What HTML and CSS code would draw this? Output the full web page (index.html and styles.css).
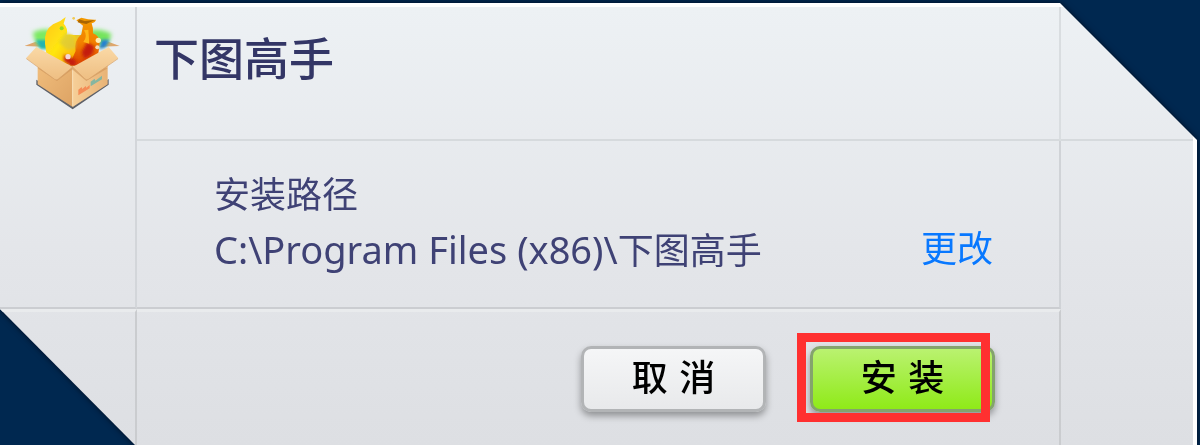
FILE: index.html
```html
<!DOCTYPE html>
<html lang="zh-CN">
<head>
    <meta charset="UTF-8">
    <meta name="viewport" content="width=device-width, initial-scale=1.0">
    <title>下图高手</title>
    <link rel="stylesheet" href="styles.css">
</head>
<body>
    <div class="shell">
        <main class="installer">
            <div class="side side-logo">
                <svg class="logo" viewBox="30 30 285 285" aria-hidden="true">
                    <defs>
                        <linearGradient id="boxLeft" x1="0" y1="0" x2="1" y2="1">
                            <stop offset="0" stop-color="#f0bd7c"/>
                            <stop offset="1" stop-color="#dda364"/>
                        </linearGradient>
                        <linearGradient id="boxRight" x1="0" y1="0" x2="1" y2="0">
                            <stop offset="0" stop-color="#f6cf98"/>
                            <stop offset="1" stop-color="#e8b376"/>
                        </linearGradient>
                        <linearGradient id="flap" x1="0" y1="0" x2="0" y2="1">
                            <stop offset="0" stop-color="#fad9a6"/>
                            <stop offset="1" stop-color="#eebe82"/>
                        </linearGradient>
                        <linearGradient id="yellow" x1="0" y1="0" x2="1" y2="1">
                            <stop offset="0" stop-color="#ffc61c"/>
                            <stop offset=".5" stop-color="#ffe610"/>
                            <stop offset="1" stop-color="#f6a000"/>
                        </linearGradient>
                        <linearGradient id="fire" x1="0" y1="0" x2="0" y2="1">
                            <stop offset="0" stop-color="#f29a00"/>
                            <stop offset=".5" stop-color="#f28000"/>
                            <stop offset="1" stop-color="#d83a08"/>
                        </linearGradient>
                        <filter id="soft" x="-30%" y="-30%" width="160%" height="160%">
                            <feGaussianBlur stdDeviation="7"/>
                        </filter>
                        <filter id="softer" x="-20%" y="-20%" width="140%" height="140%">
                            <feGaussianBlur stdDeviation="4"/>
                        </filter>
                        <filter id="edge" x="-10%" y="-10%" width="120%" height="120%">
                            <feGaussianBlur stdDeviation="2"/>
                        </filter>
                    </defs>
                    <path d="M66 228v10l107 72 106-72v-12l-106 68z" fill="#5d6068" stroke="#5d6068" stroke-width="4" filter="url(#edge)"/>
                    <!-- back flaps -->
                    <path d="M28 123l34-13 24 15zM314 123l-34-13-26 15z" fill="#dfa66d"/>
                    <!-- glow behind the pictures -->
                    <path d="M54 82q40-18 70 0l10 42H72q-16-18-18-42z" fill="#7bea62" filter="url(#soft)"/>
                    <path d="M202 82q46-18 87 4-4 30-26 38h-54z" fill="#75e45c" filter="url(#soft)"/>
                    <path d="M62 105h34l8 27H76z" fill="#22b4ae" filter="url(#softer)"/>
                    <path d="M260 104h24l-12 23-20 6z" fill="#237fd3" filter="url(#softer)"/>
                    <g filter="url(#edge)">
                        <path d="M122 90h80v82l-31 14-64-43z" fill="#e7c62a"/>
                        <path d="M90 116q-4-40 24-58 22-7 38-22l-6 20q14 14 9 33 14-2 26 3l12 38-19 38-20 12-60-36z" fill="url(#yellow)"/>
                        <path d="M184 46l15-8q24 7 44 6-2 8-13 11 6 16 4 30 20 8 20 28l-4 34-55 38-31-7 18-40q-7-28 17-50l5-26z" fill="url(#fire)"/>
                        <path d="M192 43l17 5 31-3-26 12-26-5z" fill="#aa6500"/>
                    </g>
                    <path d="M216 112l22 12-5 23-25 15-8-20zM147 150l22 7 16 13-12 16-26-18z" fill="#c41a0c" filter="url(#softer)"/>
                    <path d="M153 82l28 14 2 33-25 6-26-22z" fill="#d9c841" opacity=".7" filter="url(#softer)"/>
                    <path d="M207 76q12 18-2 35l18 5q-2-27-3-42z" fill="#ffb619" filter="url(#edge)"/>
                    <g filter="url(#edge)">
                        <circle cx="140" cy="70" r="6" fill="#94da22"/>
                        <circle cx="176" cy="40" r="4" fill="#f1ca53"/>
                        <circle cx="159" cy="155" r="8" fill="#f5d8d6"/>
                        <circle cx="250" cy="106" r="8" fill="#ffedb5"/>
                        <circle cx="247" cy="127" r="6" fill="#f5dcb7"/>
                    </g>
                    <!-- box body -->
                    <path d="M68 180l105 4v122L68 238z" fill="url(#boxLeft)"/>
                    <path d="M278 180l-105 4v122l105-68z" fill="url(#boxRight)"/>
                    <path d="M68 190l58 38 47-36v-8zM278 190l-64 38-41-34v-8z" fill="#cb8e52" opacity=".55"/>
                    <path d="M64 126l109 60-44 37q-5 3-10 0l-86-63z" fill="url(#flap)"/>
                    <path d="M281 126l-108 60 37 36q5 4 10 1l90-63z" fill="url(#flap)"/>
                    <path d="M34 161l85 62q5 3 10 0l44-37 37 36q5 4 10 1l89-62" fill="none" stroke="#d6a269" stroke-width="2"/>
                    <path d="M173 196v108" stroke="#fae0b7" stroke-width="3"/>
                    <!-- printed marks -->
                    <g filter="url(#edge)">
                        <path d="M190 254l10-8 2 6 10-9 2 5 10-8v10l-34 21z" fill="#f58d57"/>
                        <path d="M227 230l12-9 2 6 20-15v11l-34 21z" fill="#86b6a0"/>
                    </g>
                </svg>
            </div>
            <header class="title-bar">
                <h1>下图高手</h1>
            </header>
            <div class="corner"></div>
            <section class="path-info">
                <h2 class="path-label">安装路径</h2>
                <div class="path-row">
                    <span class="path"><span class="drive">C:\Program Files (x86)\</span>下图高手</span>
                    <a class="change" href="#">更改</a>
                </div>
            </section>
            <div class="side side-right"></div>
            <div class="side side-bottom"></div>
            <footer class="actions">
                <button type="button" class="btn">取 消</button>
                <div class="marked">
                    <button type="button" class="btn btn-primary">安 装</button>
                </div>
            </footer>
        </main>
    </div>
</body>
</html>
```

FILE: styles.css
```css
* { margin: 0; padding: 0; box-sizing: border-box; }

body {
    min-height: 100vh;
    display: flex;
    overflow: hidden;
    background: #002850;
    font-family: "Noto Sans", "Noto Sans CJK SC", sans-serif;
    font-size: 36px;
    color: #3f4275;
}

/* the shadow sits on the wrapper because the panel itself is clipped */
.shell {
    flex: 1;
    display: flex;
    padding: 3px 3px 0 0;
    filter: drop-shadow(0 0 3px #000c20);
}

.installer {
    flex: 1;
    display: grid;
    grid-template-columns: 137px 1fr 132px;
    grid-template-rows: 134px 168px 1fr;
    background: linear-gradient(#edf1f4, #e3e5e9 60%, #dddfe3);
    border-top: 4px solid #fff;
    border-right: 4px solid #fff;
    clip-path: polygon(0 0, calc(100% - 137px) 0, 100% 137px, 100% 100%, 135px 100%, 0 306px);
}

.side-logo {
    grid-row: 1 / 3;
    padding: 8px 0 0 25px;
    border-right: 2px solid #d3d6da;
    border-bottom: 2px solid #cbcdd1;
}

.logo {
    display: block;
    width: 95px;
    height: 95px;
}

.title-bar {
    padding: 19px 17px;
    border-right: 2px solid #d9dde0;
    border-bottom: 2px solid #d6dadd;
}

h1 {
    font-size: 45px;
    font-weight: 500;
    line-height: 66px;
    color: #333666;
}

.corner { border-bottom: 2px solid #d6dadd; }

.path-info {
    padding: 27px 66px 0 77px;
    border-right: 2px solid #d0d3d7;
    border-bottom: 2px solid #cbcdd1;
}

.path-label {
    font-size: 36px;
    font-weight: 400;
    line-height: 54px;
}

.path-row {
    display: flex;
    justify-content: space-between;
    line-height: 54px;
    white-space: nowrap;
}

.drive { font-size: 38px; }

.change {
    color: #0878ff;
    text-decoration: none;
}

.side-right { grid-row: 2 / 4; grid-column: 3; }

.side-bottom {
    grid-row: 3;
    grid-column: 1;
    border-right: 2px solid #cacccf;
    border-top: 3px solid #e9ebed;
}

.actions {
    display: flex;
    justify-content: flex-end;
    align-items: flex-start;
    gap: 44px;
    padding: 34px 64px 32px 0;
    border-top: 3px solid #e9ebed;
    border-right: 2px solid #cacccf;
}

.btn {
    width: 185px;
    height: 66px;
    border: 3px solid #b2b4b6;
    border-radius: 10px;
    background: linear-gradient(#f5f6f7, #e8e9eb);
    box-shadow: 0 4px 7px rgba(0, 0, 0, 0.35);
    font-family: "DejaVu Sans", "Noto Sans CJK SC", sans-serif;
    font-size: 36px;
    font-weight: 500;
    line-height: 54px;
    color: #000;
    cursor: pointer;
}

.btn-primary {
    border-color: #84a36d;
    background: linear-gradient(#baf270, #8fea18);
}

.marked { position: relative; }

/* red box around the install button */
.marked::after {
    content: "";
    position: absolute;
    inset: -13px 5px -10px -13px;
    border: 9px solid #ff3030;
    pointer-events: none;
}
```
